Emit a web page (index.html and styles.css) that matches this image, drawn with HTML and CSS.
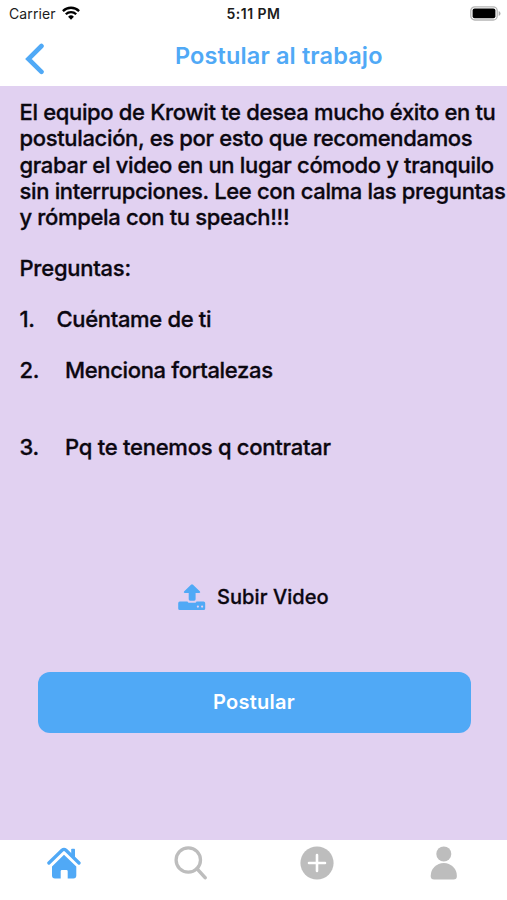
FILE: index.html
```html
<!DOCTYPE html>
<html lang="es">
<head>
<meta charset="utf-8">
<title>Postular al trabajo</title>
<link rel="stylesheet" href="styles.css">
</head>
<body>
<div class="app">
  <div class="status">
    <div class="carrier"><span>Carrier</span>
      <svg width="18" height="14" viewBox="0 0 18 14" fill="none" stroke="#000" stroke-width="2.3"><path d="M.9 5.1a11.5 11.5 0 0 1 16.2 0M3.8 8.2a7.4 7.4 0 0 1 10.4 0"/><path d="M9 13.7 6.1 10.8a4.1 4.1 0 0 1 5.8 0z" fill="#000" stroke="none"/></svg>
    </div>
    <span class="time">5:11 PM</span>
    <svg class="battery" width="31" height="15" viewBox="0 0 31 15"><rect x=".8" y=".8" width="26.4" height="13.2" rx="4" fill="#fff" stroke="#b5b5b5" stroke-width="1.3"/><rect x="2.6" y="2.6" width="22.8" height="9.6" rx="2" fill="#000"/><path d="M28.7 5v5q1.8-.8 1.8-2.5T28.7 5z" fill="#aaa"/></svg>
  </div>
  <header class="header">
    <svg class="back" width="20" height="32" viewBox="0 0 20 32" fill="none" stroke="#50a9f6" stroke-width="4.6" stroke-linecap="round" stroke-linejoin="miter"><path d="M16.5 3 3.4 16l13.1 12.8"/></svg>
    <h1>Postular al trabajo</h1>
  </header>
  <main class="content">
    <p class="intro">
      <span class="line">El equipo de Krowit te desea mucho éxito en tu</span>
      <span class="line">postulación, es por esto que recomendamos</span>
      <span class="line">grabar el video en un lugar cómodo y tranquilo</span>
      <span class="line">sin interrupciones. Lee con calma las preguntas</span>
      <span class="line">y rómpela con tu speach!!!</span>
    </p>
    <h2>Preguntas:</h2>
    <div class="question q1"><span class="num">1.</span><span>Cuéntame de ti</span></div>
    <div class="question q2"><span class="num">2.</span><span>Menciona fortalezas</span></div>
    <div class="question q3"><span class="num">3.</span><span>Pq te tenemos q contratar</span></div>
    <div class="upload">
      <svg width="28" height="27" viewBox="0 0 28 27" fill="#50a9f6"><path d="M14 .3q.5 0 1 .5l7 6.700q.8 1.300-.8 1.400h-3.600v6.400q0 1.400-1.400 1.400h-4.100q-1.400 0-1.400-1.400V8.900H6.800q-1.600-.1-.8-1.400L13 .8q.5-.5 1-.5z"/><path fill-rule="evenodd" d="M1.800 17.600h7.700q.3 1.200 1.500 1.200h6q1.200 0 1.500-1.200h7.100q1.600 0 1.600 1.600v5.200q0 1.600-1.600 1.600H1.800Q.2 26 .2 24.400v-5.200q0-1.600 1.600-1.600zM19.900 21.500a1.100 1.100 0 1 0 0 2.200 1.100 1.100 0 0 0 0-2.200zM24.100 21.500a1.100 1.100 0 1 0 0 2.200 1.100 1.100 0 0 0 0-2.200z"/></svg>
      <span>Subir Video</span>
    </div>
    <button class="submit">Postular</button>
  </main>
  <nav class="tabs">
    <a><svg width="34" height="34" viewBox="0 0 34 34" fill="#50a9f6"><path d="M1.900 17 15 4.300q2-1.800 4 0L32 17" fill="none" stroke="#50a9f6" stroke-width="3.300" stroke-linecap="round"/><path d="M24.200 3.500q0-.8.800-.8h2.200q.8 0 .8.800v9l-3.800-3.700z"/><path d="M17 8.700 29.300 20.500v9q0 3-3 3h-5.600v-7.300q0-1.200-1.200-1.200h-4.600q-1.200 0-1.200 1.200v7.300H8q-3 0-3-3v-9z"/></svg></a>
    <a><svg width="34" height="34" viewBox="0 0 34 34" fill="none" stroke="#bdbdbd" stroke-width="3.300"><circle cx="14.300" cy="14" r="12.200"/><path d="m22.900 22.600 8.200 9" stroke-width="3.500" stroke-linecap="round"/></svg></a>
    <a><svg width="34" height="34" viewBox="0 0 34 34"><circle cx="17" cy="17" r="16.600" fill="#bdbdbd"/><path d="M17 9v16M9 17h16" stroke="#fff" stroke-width="2.600" stroke-linecap="round"/></svg></a>
    <a><svg width="34" height="34" viewBox="0 0 34 34" fill="#bdbdbd"><circle cx="16.800" cy="7.900" r="7.500"/><path d="M3.700 30a13.100 13 0 0 1 26.200 0q0 3.500-3.400 3.500H7.100Q3.700 33.500 3.700 30z"/></svg></a>
  </nav>
</div>
</body>
</html>
```
FILE: styles.css
```css
* { box-sizing: border-box; }
body { margin: 0; background: #fff; font-family: Inter, "Liberation Sans", sans-serif; color: #0b0710; }
.app { width: 507px; height: 900px; display: flex; flex-direction: column; overflow: hidden; }
svg { display: block; flex: none; }
.status { height: 28px; display: grid; grid-template-columns: 1fr auto 1fr; align-items: center; padding: 0 6px 0 9px; font-size: 14px; color: #1c1c1c; }
.carrier { display: flex; align-items: center; gap: 6px; height: 26px; letter-spacing: 0.1px; }
.carrier span { margin-top: -2px; }
.carrier svg { margin-top: -3px; }
.time { font-weight: 600; font-size: 14px; letter-spacing: 0.5px; margin: -1px 3px 0 0; }
.battery { justify-self: end; margin-top: -2px; }
.header { height: 58px; display: grid; grid-template-columns: 45px 1fr; align-items: center; background: #fff; }
.back { margin: 4px 0 0 25px; }
h1 { margin: -3px 0 0; padding-left: 130px; font-size: 23.5px; letter-spacing: 0.13px; font-weight: 600; line-height: 28px; color: #50a9f6; white-space: nowrap; }
.content { flex: none; height: 754px; background: #e1d1f1; padding: 13.300px 0 0 19.500px; font-size: 22px; font-weight: 500; line-height: 26.150px; display: flex; flex-direction: column; white-space: nowrap; letter-spacing: -0.34px; -webkit-text-stroke: 0.3px currentColor; }
.intro { margin: 0 0 25px; }
.line { display: block; width: max-content; }
h2 { margin: 0 0 25px; font-size: inherit; font-weight: inherit; line-height: inherit; letter-spacing: -0.25px; }
.question { display: flex; }
.num { width: 45.500px; }
.q1 .num { width: 37px; }
.q1 { margin-bottom: 24.500px; }
.q2 { margin-bottom: 50.700px; }
.q3 { letter-spacing: -0.25px; }
.upload { display: flex; align-items: center; gap: 11.500px; margin: 124px 0 0 158px; font-size: 20px; height: 27px; letter-spacing: 0.08px; }
.submit { width: 433px; height: 61px; margin: 61px 0 0 18px; border: 0; border-radius: 12px; background: #50a9f6; color: #fff; font: 600 20px Inter, sans-serif; letter-spacing: 0.25px; flex: none; -webkit-text-stroke: 0; }
.tabs { height: 60px; display: grid; grid-template-columns: repeat(4, 1fr); justify-items: center; padding: 6px 0 0 1px; background: #fff; }
```
